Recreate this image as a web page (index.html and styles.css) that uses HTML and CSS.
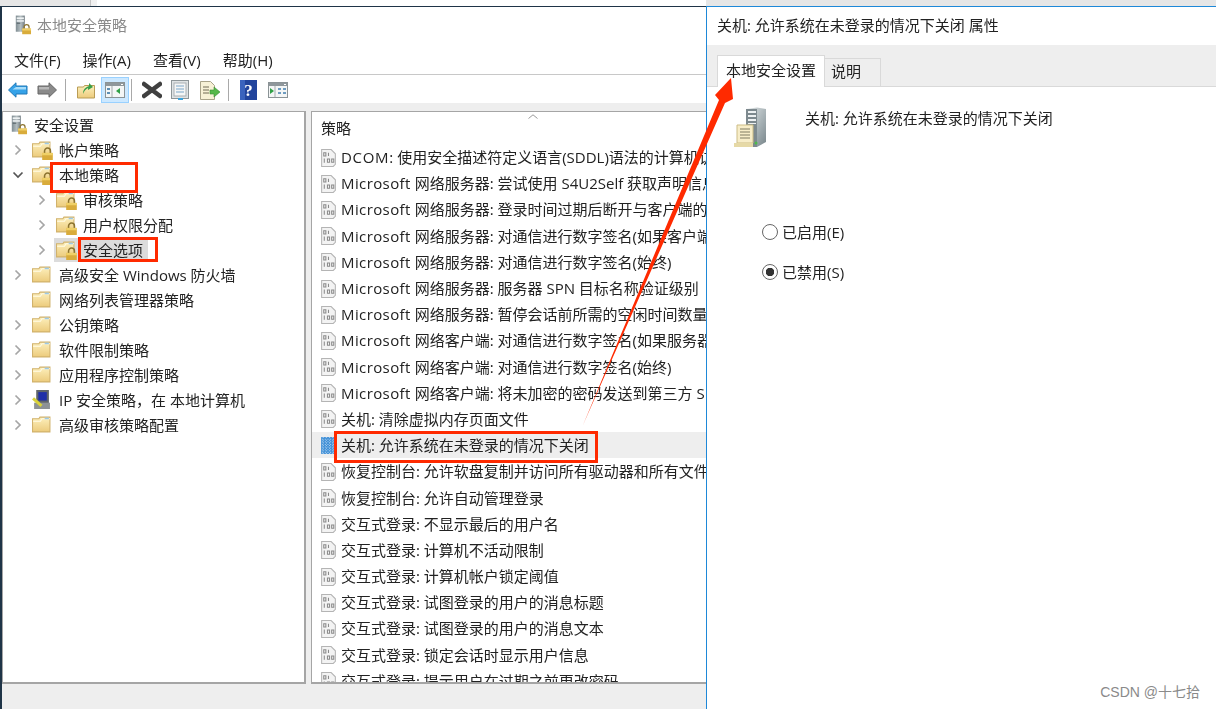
FILE: index.html
```
<!DOCTYPE html>
<html lang="zh-CN">
<head>
<meta charset="utf-8">
<title>本地安全策略</title>
<link rel="stylesheet" href="styles.css">
</head>
<body>
<svg class="defs" width="0" height="0" aria-hidden="true">
  <defs>
    <linearGradient id="fold" x1="0" y1="0" x2="0" y2="1"><stop offset="0" stop-color="#fdf0bd"/><stop offset="1" stop-color="#eccb7c"/></linearGradient>
    <linearGradient id="tower" x1="0" y1="0" x2="1" y2="0"><stop offset="0" stop-color="#7f8c92"/><stop offset=".55" stop-color="#b5bfc2"/><stop offset="1" stop-color="#6f7a80"/></linearGradient>
    <linearGradient id="side" x1="0" y1="0" x2="1" y2="1"><stop offset="0" stop-color="#e4e9ea"/><stop offset=".6" stop-color="#a3aeb2"/><stop offset="1" stop-color="#78858a"/></linearGradient>
    <symbol id="lock" viewBox="0 0 11 11">
      <path d="M3 5V3.400a2.500 2.500 0 0 1 5 0V5" fill="none" stroke="#8c7430" stroke-width="1.300"/>
      <rect x="1" y="5" width="9" height="6" fill="#d9ac3b"/>
      <rect x="1" y="5" width="9" height="2" fill="#efd067"/>
    </symbol>
    <symbol id="folder" viewBox="0 0 18 16">
      <path d="M.5 2.500h6l1-1.500h9.500v14H.5z" fill="url(#fold)" stroke="#d1b26c"/>
      <path d="M1 5h7l1.500-2.500H17" fill="none" stroke="#fffbe6"/>
      <rect x="12" y="1.500" width="4" height="1.500" fill="#9ec9e6"/>
    </symbol>
    <symbol id="server-lock" viewBox="0 0 20 21">
      <rect x="2" y="0" width="10" height="18" fill="url(#tower)"/>
      <rect x="3" y="2" width="8" height="2" fill="#eef2f3"/>
      <rect x="3" y="5" width="8" height="2" fill="#e2e7e9"/>
      <rect x="3" y="8" width="4" height="1" fill="#4e5a60"/>
      <use href="#lock" x="8" y="9" width="12" height="12"/>
    </symbol>
    <symbol id="policy" viewBox="0 0 16 18">
      <path d="M1.500 1.500h9l4 4v10l-2 2h-11z" fill="#f3f3f3" stroke="#b4b4b4"/>
      <path d="M3.500 4.500h2v3h-2zM8 4.500v3M4 10v4M7 10.500h2v3H7zM11 10.500h2v3h-2z" fill="none" stroke="#8a8a8a"/>
    </symbol>
    <symbol id="policy-sel" viewBox="0 0 16 18">
      <rect x="1" y="1" width="14" height="16" fill="#3f8fd6"/>
      <path d="M2 3h12M2 5.500h12M2 8h12M2 10.500h12M2 13h12M2 15.500h12M3 1v16M6 1v16M9 1v16M12 1v16" stroke="#a9cdee" stroke-dasharray="1 1.500"/>
    </symbol>
    <symbol id="pane" viewBox="0 0 20 16">
      <rect x=".5" y=".5" width="19" height="15" fill="#f4f6f6" stroke="#8b9396"/>
      <rect x="1" y="1" width="18" height="3" fill="#8f979b"/>
      <rect x="16" y="2" width="2" height="1" fill="#fff"/>
      <path d="M7 4v11" stroke="#a5acaf"/>
    </symbol>
    <symbol id="chev" viewBox="0 0 8 12"><path d="M1.500 1.500 6 6l-4.500 4.500" fill="none" stroke="#a6a6a6" stroke-width="1.700"/></symbol>
    <symbol id="chev-d" viewBox="0 0 12 8"><path d="M1.500 1.500 6 6l4.500-4.500" fill="none" stroke="#555" stroke-width="1.700"/></symbol>
  </defs>
</svg>

<div class="topstrip"><div class="topstrip-grey"></div><div class="topstrip-line"></div><div class="topstrip-right"></div></div>

<div class="windows">
  <main class="mmc">
    <div class="mmc-title soft">
      <svg class="ico-title"><use href="#server-lock"/></svg>
      <span>本地安全策略</span>
    </div>
    <nav class="menu soft"><span>文件(F)</span><span>操作(A)</span><span>查看(V)</span><span>帮助(H)</span></nav>
    <div class="toolbar soft">
      <svg class="tool tool-nav" viewBox="0 0 20 16"><path d="M.5 8 8 .8V4h11v8H8v3.200z" fill="#35a2e8" stroke="#2079b8" stroke-linejoin="round"/><path d="M8 5h10v2.500H4.500z" fill="#a5dcfa"/></svg>
      <svg class="tool tool-nav" viewBox="0 0 20 16"><path d="M19.500 8 12 .8V4H1v8h11v3.200z" fill="#8a8a8a" stroke="#666" stroke-linejoin="round"/><path d="M2 5h10v2.500H2z" fill="#b8b8b8"/></svg>
      <i class="tool-sep"></i>
      <svg class="tool tool-up" viewBox="0 0 18 18"><path d="M.5 6h6l1-1.500h10V17H.5z" fill="url(#fold)" stroke="#b99c55"/><path d="M6 13C6 8 9 6 12 5V2l4 4-5 3V7c-2 1-4 3-5 6z" fill="#3aa04a"/></svg>
      <span class="tool-on"><svg class="tool-pane" viewBox="0 0 20 16"><use href="#pane"/><path d="M2 6h3v2H2zM2 10h3v2H2z" fill="#5c8fb5"/><path d="M15 6v6l-4-3z" fill="#30a046"/></svg></span>
      <i class="tool-sep sep-tight"></i>
      <svg class="tool tool-x" viewBox="0 0 20 18"><path d="M2 3 18 15M18 3 2 15" stroke="#404040" stroke-width="4.500" stroke-linecap="round"/></svg>
      <svg class="tool tool-doc" viewBox="0 0 18 20"><rect x=".5" y=".5" width="17" height="18" fill="#dfe3e4" stroke="#8d9598"/><rect x="3" y="3" width="12" height="13" fill="#f5f6f6" stroke="#a9b0b3"/><path d="M5 6h8M5 9h8M5 12h8" stroke="#7ba6c8"/><rect x="7" y="18" width="5" height="2" fill="#3aa3dc"/></svg>
      <svg class="tool tool-exp" viewBox="0 0 21 19"><path d="M1.500.5h10l4 4v14h-14z" fill="#f7f1d6" stroke="#a9a389"/><path d="M4 6h6M4 9h6M4 12h6" stroke="#706b55"/><path d="M11 9h4V6l6 5-6 5v-3h-4z" fill="#56b84a" stroke="#3b8f34" stroke-width=".6"/></svg>
      <i class="tool-sep"></i>
      <svg class="tool tool-help" viewBox="0 0 17 20"><rect width="17" height="20" fill="#21449c"/><rect x="0" y="0" width="5" height="20" fill="#3a63bd"/><text x="8.500" y="16" class="help-q">?</text></svg>
      <svg class="tool tool-pane2" viewBox="0 0 20 16"><use href="#pane"/><path d="M2 6v6l4-3z" fill="#30a046"/><path d="M10 6h3v2h-3zM15 6h3v2h-3zM10 10h3v2h-3zM15 10h3v2h-3z" fill="#6e9cc0"/></svg>
    </div>
    <div class="panes soft">
      <section class="tree">
        <div class="row root"><svg class="ico-root"><use href="#server-lock"/></svg><span>安全设置</span></div>
        <div class="row"><svg class="chev"><use href="#chev"/></svg><span class="fl"><svg class="ico"><use href="#folder"/></svg><svg class="lk"><use href="#lock"/></svg></span><span>帐户策略</span></div>
        <div class="row"><svg class="chev chev-open"><use href="#chev-d"/></svg><span class="fl"><svg class="ico"><use href="#folder"/></svg><svg class="lk"><use href="#lock"/></svg></span><span>本地策略</span></div>
        <div class="row sub"><svg class="chev"><use href="#chev"/></svg><span class="fl"><svg class="ico"><use href="#folder"/></svg><svg class="lk"><use href="#lock"/></svg></span><span>审核策略</span></div>
        <div class="row sub"><svg class="chev"><use href="#chev"/></svg><span class="fl"><svg class="ico"><use href="#folder"/></svg><svg class="lk"><use href="#lock"/></svg></span><span>用户权限分配</span></div>
        <div class="row sub"><svg class="chev"><use href="#chev"/></svg><span class="sel"><span class="fl"><svg class="ico"><use href="#folder"/></svg><svg class="lk"><use href="#lock"/></svg></span><span>安全选项</span></span></div>
        <div class="row"><svg class="chev"><use href="#chev"/></svg><svg class="ico"><use href="#folder"/></svg><span>高级安全 Windows 防火墙</span></div>
        <div class="row"><i class="chev"></i><svg class="ico"><use href="#folder"/></svg><span>网络列表管理器策略</span></div>
        <div class="row"><svg class="chev"><use href="#chev"/></svg><svg class="ico"><use href="#folder"/></svg><span>公钥策略</span></div>
        <div class="row"><svg class="chev"><use href="#chev"/></svg><svg class="ico"><use href="#folder"/></svg><span>软件限制策略</span></div>
        <div class="row"><svg class="chev"><use href="#chev"/></svg><svg class="ico"><use href="#folder"/></svg><span>应用程序控制策略</span></div>
        <div class="row"><svg class="chev"><use href="#chev"/></svg><svg class="ico ico-ip" viewBox="0 0 18 18"><rect x="4" y="0" width="12" height="13" fill="#5f656a"/><rect x="6" y="2" width="8" height="8" fill="#1f2fa8"/><rect x="2" y="12" width="15" height="6" fill="#8d9295"/><path d="M1 8l8 7" stroke="#d9d23a" stroke-width="2.800"/></svg><span>IP 安全策略，在 本地计算机</span></div>
        <div class="row"><svg class="chev"><use href="#chev"/></svg><svg class="ico"><use href="#folder"/></svg><span>高级审核策略配置</span></div>
      </section>
      <section class="list">
        <div class="list-head"><span>策略</span><svg class="sort" viewBox="0 0 10 5"><path d="M.5 4.500 5 .8l4.500 3.700" fill="none" stroke="#9a9a9a"/></svg></div>
        <div class="item"><svg class="pol"><use href="#policy"/></svg><span><span class="en-d">DCOM</span>: 使用安全描述符定义语言(SDDL)语法的计算机访问限制</span></div>
        <div class="item"><svg class="pol"><use href="#policy"/></svg><span><span class="en">Microsoft</span> 网络服务器: 尝试使用 S4U2Self 获取声明信息</span></div>
        <div class="item"><svg class="pol"><use href="#policy"/></svg><span><span class="en">Microsoft</span> 网络服务器: 登录时间过期后断开与客户端的连接</span></div>
        <div class="item"><svg class="pol"><use href="#policy"/></svg><span><span class="en">Microsoft</span> 网络服务器: 对通信进行数字签名(如果客户端允许)</span></div>
        <div class="item"><svg class="pol"><use href="#policy"/></svg><span><span class="en">Microsoft</span> 网络服务器: 对通信进行数字签名(始终)</span></div>
        <div class="item"><svg class="pol"><use href="#policy"/></svg><span><span class="en">Microsoft</span> 网络服务器: 服务器 SPN 目标名称验证级别</span></div>
        <div class="item"><svg class="pol"><use href="#policy"/></svg><span><span class="en">Microsoft</span> 网络服务器: 暂停会话前所需的空闲时间数量</span></div>
        <div class="item"><svg class="pol"><use href="#policy"/></svg><span><span class="en">Microsoft</span> 网络客户端: 对通信进行数字签名(如果服务器允许)</span></div>
        <div class="item"><svg class="pol"><use href="#policy"/></svg><span><span class="en">Microsoft</span> 网络客户端: 对通信进行数字签名(始终)</span></div>
        <div class="item"><svg class="pol"><use href="#policy"/></svg><span><span class="en">Microsoft</span> 网络客户端: 将未加密的密码发送到第三方 SMB 服务器</span></div>
        <div class="item"><svg class="pol"><use href="#policy"/></svg><span>关机: 清除虚拟内存页面文件</span></div>
        <div class="item item-sel"><svg class="pol"><use href="#policy-sel"/></svg><span>关机: 允许系统在未登录的情况下关闭</span></div>
        <div class="item"><svg class="pol"><use href="#policy"/></svg><span>恢复控制台: 允许软盘复制并访问所有驱动器和所有文件夹</span></div>
        <div class="item"><svg class="pol"><use href="#policy"/></svg><span>恢复控制台: 允许自动管理登录</span></div>
        <div class="item"><svg class="pol"><use href="#policy"/></svg><span>交互式登录: 不显示最后的用户名</span></div>
        <div class="item"><svg class="pol"><use href="#policy"/></svg><span>交互式登录: 计算机不活动限制</span></div>
        <div class="item"><svg class="pol"><use href="#policy"/></svg><span>交互式登录: 计算机帐户锁定阈值</span></div>
        <div class="item"><svg class="pol"><use href="#policy"/></svg><span>交互式登录: 试图登录的用户的消息标题</span></div>
        <div class="item"><svg class="pol"><use href="#policy"/></svg><span>交互式登录: 试图登录的用户的消息文本</span></div>
        <div class="item"><svg class="pol"><use href="#policy"/></svg><span>交互式登录: 锁定会话时显示用户信息</span></div>
        <div class="item"><svg class="pol"><use href="#policy"/></svg><span>交互式登录: 提示用户在过期之前更改密码</span></div>
      </section>
    </div>
  </main>

  <aside class="dialog">
    <div class="dlg-title soft">关机: 允许系统在未登录的情况下关闭 属性</div>
    <div class="tabs soft"><span class="tab tab-on">本地安全设置</span><span class="tab">说明</span></div>
    <div class="dlg-body">
      <div class="dlg-head soft">
        <svg class="dlg-ico" viewBox="0 0 38 42">
          <path d="M12 3l11-1.500 9 1.500v33l-9 5H12z" fill="url(#side)"/>
          <path d="M12 3h11v38H12z" fill="#7d898e"/>
          <path d="M14 5h8v2h-8zM14 9h8v2h-8zM14 13h8v2h-8zM14 17h8v1h-8z" fill="#eef1f2"/>
          <circle cx="22" cy="37" r="1.500" fill="#4dbb4a"/>
          <path d="M3 19h16v18H3z" fill="#f7edc8" stroke="#cdbd86"/>
          <path d="M6 23h10M6 26h10M6 29h10M6 32h10" stroke="#a8a184" stroke-width="1.400"/>
          <path d="M0 37h19v4H0z" fill="#e6d9a6"/>
        </svg>
        <div class="dlg-name">关机: 允许系统在未登录的情况下关闭</div>
      </div>
      <div class="radios soft">
        <div class="radio"><i class="dot"></i><span>已启用(E)</span></div>
        <div class="radio"><i class="dot dot-on"></i><span>已禁用(S)</span></div>
      </div>
    </div>
    <div class="watermark">CSDN @十七拾</div>
  </aside>
</div>

<div class="mark mark-a"></div>
<div class="mark mark-b"></div>
<div class="mark mark-c"></div>
<svg class="arrow" viewBox="0 0 1216 709"><polygon points="583,425 719,100 715,95 731,78 733,99 725,103" fill="#ff2a00"/></svg>
</body>
</html>
```
FILE: styles.css
```
* { box-sizing: border-box; }
html, body { margin: 0; padding: 0; }
body {
  width: 1216px;
  height: 709px;
  overflow: hidden;
  background: #fff;
  position: relative;
  display: flex;
  flex-direction: column;
  font-family: "Open Sans", "Noto Sans CJK SC", sans-serif;
  font-size: 15px;
  line-height: 20px;
  color: #222;
}
.defs { position: absolute; }
svg { display: block; flex: none; }
i { display: block; flex: none; }
.soft { filter: blur(.35px); }

.topstrip { height: 6px; display: flex; flex: none; }
.topstrip-grey { width: 91px; background: #e6e6e6; border-right: 1px solid #c4c4c4; }
.topstrip-line { width: 6px; background: #f0f0f0; }
.topstrip-right { width: 510px; margin-left: auto; background: #e6e6e6; }

.windows { flex: 1; display: flex; min-height: 0; }

.mmc {
  width: 706px;
  flex: none;
  display: flex;
  flex-direction: column;
  border-top: 1px solid #1f3447;
  border-left: 2px solid #1f3447;
  background: #eee;
}
.mmc-title {
  height: 33px;
  background: #fff;
  display: flex;
  align-items: center;
  padding: 2px 0 0 12px;
  gap: 5px;
  color: #8a8a8a;
}
.ico-title { width: 18px; height: 20px; }
.menu {
  height: 34px;
  background: #fff;
  display: flex;
  align-items: center;
  gap: 22px;
  padding: 6px 0 0 12px;
}
.toolbar {
  height: 29px;
  background: #fff;
  border-top: 1px solid #c8c8c8;
  display: flex;
  align-items: center;
  padding: 2px 0 0 6px;
}
.tool-nav { width: 20px; height: 16px; margin-right: 9px; }
.tool-sep { width: 1px; height: 22px; background: #a9a9a9; margin: 0 11px 0 -1px; }
.sep-tight { margin: 0 10px 0 2px; }
.tool-up { width: 18px; height: 18px; margin-right: 6px; }
.tool-on {
  width: 28px;
  height: 26px;
  background: #cce8ff;
  border: 1px solid #99d1ff;
  display: flex;
  align-items: center;
  justify-content: center;
}
.tool-pane { width: 20px; height: 16px; }
.tool-x { width: 20px; height: 18px; margin-right: 9px; }
.tool-doc { width: 18px; height: 20px; margin-right: 10px; }
.tool-exp { width: 21px; height: 19px; margin-right: 9px; }
.tool-help { width: 17px; height: 20px; margin-right: 11px; }
.tool-pane2 { width: 20px; height: 16px; }
.help-q { font: bold 17px "Liberation Serif", serif; fill: #fff; text-anchor: middle; }

.panes {
  flex: 1;
  min-height: 0;
  display: flex;
  gap: 5px;
  padding: 8px 0 25px 0;
}
.tree {
  width: 304px;
  flex: none;
  background: #fff;
  border: 1px solid #a5a5a5;
  border-width: 1px 2px 2px 1px;
  overflow: hidden;
}
.row {
  height: 25px;
  display: flex;
  align-items: center;
  padding-left: 11px;
  white-space: nowrap;
}
.root { padding-left: 7px; gap: 6px; }
.ico-root { width: 18px; height: 20px; }
.sub { padding-left: 35px; }
.chev { width: 8px; height: 12px; margin-right: 10px; }
.chev-open { width: 12px; height: 8px; margin-left: -2px; margin-right: 8px; }
.ico { width: 19px; height: 17px; margin-right: 8px; }
.ico-ip { height: 19px; }
.fl { position: relative; display: block; flex: none; width: 27px; height: 17px; }
.lk { position: absolute; left: 9px; top: 6px; width: 13px; height: 13px; }
.sel { display: flex; align-items: center; background: #dcdcdc; height: 24px; padding: 0 5px 0 2px; margin-left: -2px; }

.list {
  flex: 1;
  min-width: 0;
  background: #fff;
  border: 1px solid #a5a5a5;
  border-width: 1px 0 2px 1px;
  overflow: hidden;
}
.list-head {
  height: 32px;
  position: relative;
  padding: 6px 0 0 9px;
}
.sort { position: absolute; left: 216px; top: 2px; width: 10px; height: 5px; }
.item {
  height: 26.2px;
  display: flex;
  align-items: center;
  padding-left: 8px;
  gap: 4px;
  white-space: nowrap;
}
.en { letter-spacing: .4px; }
.en-d { letter-spacing: .7px; }
.item-sel { background: #eee; }
.pol { width: 17px; height: 19px; }

.dialog {
  flex: 1;
  min-width: 0;
  display: flex;
  flex-direction: column;
  position: relative;
  background: #fff;
  border-top: 1px solid #1e88d8;
  border-left: 1px solid #1e88d8;
}
.dlg-title {
  height: 38px;
  flex: none;
  display: flex;
  align-items: center;
  padding: 0 0 2px 10px;
}
.tabs {
  height: 42px;
  flex: none;
  background: #eee;
  display: flex;
  align-items: flex-end;
  padding-left: 10px;
  border-bottom: 1px solid #d9d9d9;
}
.tab {
  height: 28px;
  width: 56px;
  padding-left: 6px;
  border: 1px solid #d9d9d9;
  border-bottom: 0;
  border-left: 0;
  line-height: 25px;
}
.tab-on {
  width: 108px;
  height: 32px;
  padding-left: 8px;
  background: #fff;
  border-left: 1px solid #d9d9d9;
  border-top: 1px solid #d9d9d9;
  line-height: 28px;
  margin-bottom: -1px;
}
.dlg-body { flex: 1; padding: 19px 0 0 27px; }
.dlg-head { display: flex; gap: 33px; }
.dlg-ico { width: 38px; height: 42px; }
.dlg-name { margin-top: 2px; }
.radios { margin-top: 74px; padding-left: 28px; display: flex; flex-direction: column; gap: 20px; }
.radio { display: flex; align-items: center; gap: 4px; height: 20px; }
.dot { width: 16px; height: 16px; border-radius: 50%; border: 1px solid #666; background: #fff; }
.dot-on { background: radial-gradient(circle, #333 0 4px, #fff 4.500px); }
.watermark {
  position: absolute;
  right: 16px;
  bottom: 9px;
  font: 14px/16px "Liberation Sans", "Noto Sans CJK SC", sans-serif;
  color: #8a8a8a;
}

.mark { position: absolute; border: 3px solid #ff2a00; }
.mark-a { left: 50px; top: 162px; width: 88px; height: 31px; }
.mark-b { left: 78px; top: 237px; width: 80px; height: 25px; }
.mark-c { left: 334px; top: 431px; width: 264px; height: 32px; }
.arrow { position: absolute; left: 0; top: 0; width: 1216px; height: 709px; }
```
